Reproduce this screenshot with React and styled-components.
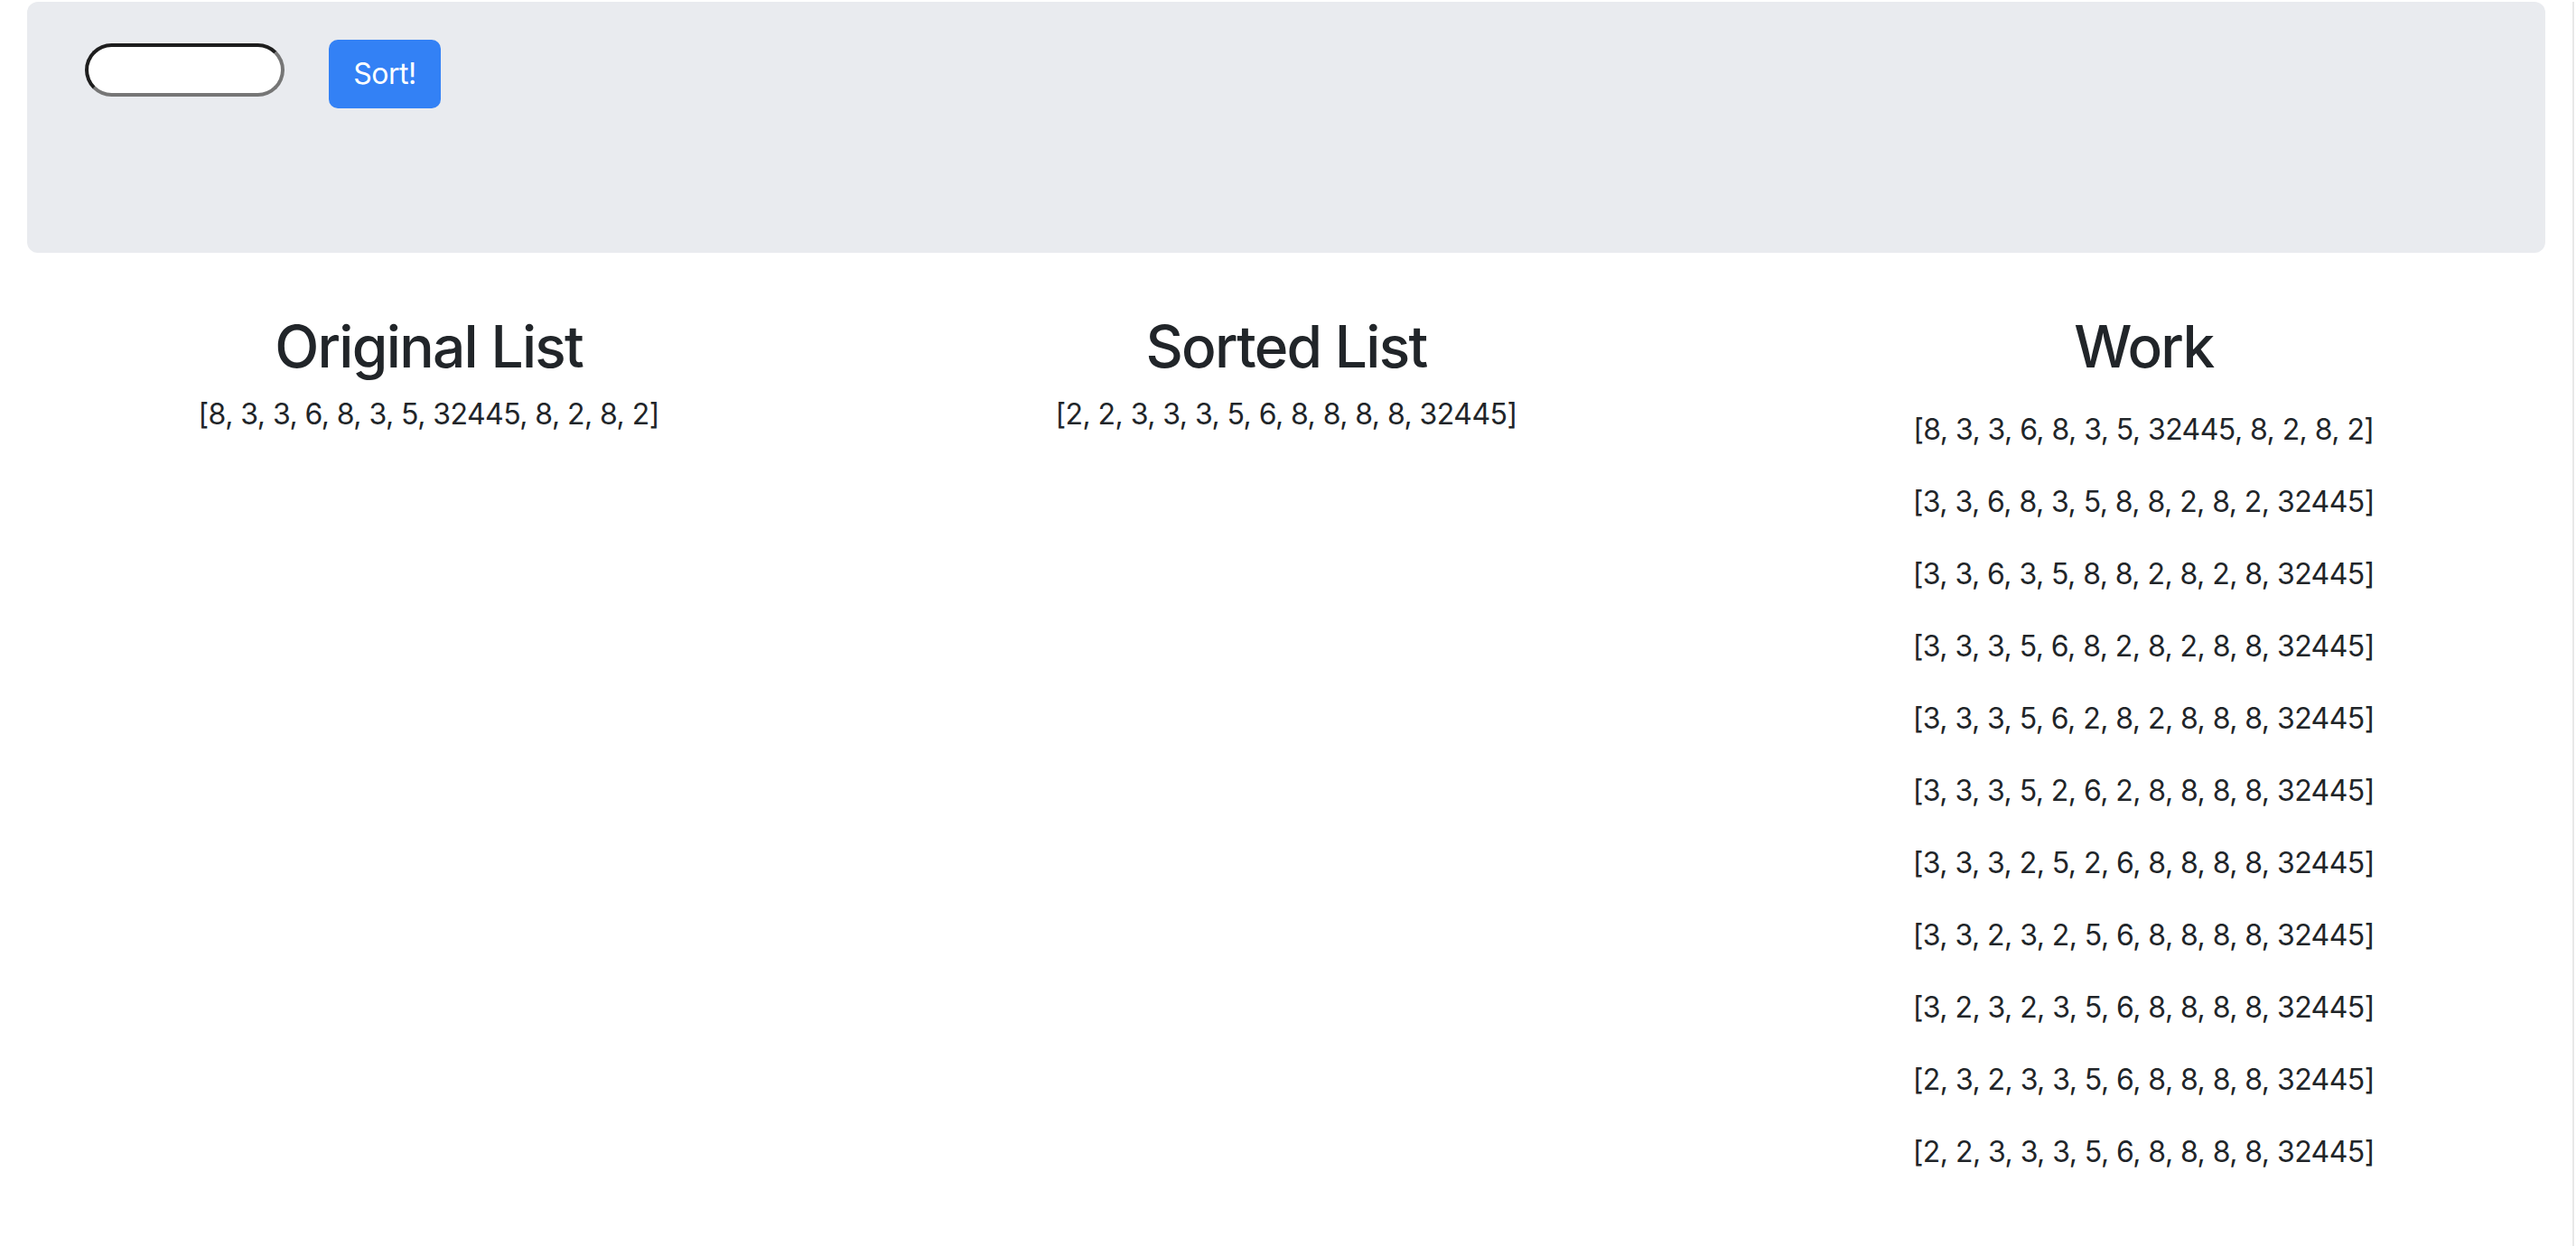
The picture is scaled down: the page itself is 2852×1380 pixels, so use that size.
import React from "react";
import styled, { createGlobalStyle } from "styled-components";

const GlobalStyle = createGlobalStyle`
    html, body {
        margin: 0;
        padding: 0;
        background: #fff;
    }
    body {
        font-family: Inter, "Noto Sans", "Liberation Sans", sans-serif;
        color: #212529;
    }
`

const Page = styled.div`
    width: 2850px;
    min-height: 1380px;
    box-sizing: border-box;
    border-right: 2px solid #e8e8e8;
`

const Jumbotron = styled.div`
    margin: 2px 30px 0 30px;
    height: 278px;
    box-sizing: border-box;
    padding: 42px 64px 0 64px;
    background-color: #e9ebef;
    border-radius: 12px;
    display: flex;
    align-items: flex-start;
    gap: 49px;
`

const NumberInput = styled.input`
    margin-top: 4px;
    width: 221px;
    height: 59px;
    box-sizing: border-box;
    border-style: solid;
    border-width: 4px;
    border-color: #1e1e1e #767676 #767676 #1e1e1e;
    border-radius: 30px;
    background: #fff;
    outline: none;
    padding: 0 20px;
    font-size: 28px;
`

const SortButton = styled.button`
    width: 124px;
    height: 76px;
    border: none;
    border-radius: 10px;
    background-color: #3381f5;
    color: #fff;
    font-family: Inter, "Noto Sans", sans-serif;
    font-size: 32px;
    letter-spacing: -0.5px;
    line-height: 48px;
    padding: 0;
    cursor: pointer;
`

const Columns = styled.div`
    display: grid;
    grid-template-columns: repeat(3, 1fr);
    padding-top: 66px;
`

const Column = styled.div`
    display: flex;
    flex-direction: column;
    align-items: center;
    text-align: center;
`

const Title = styled.h2`
    margin: 0;
    font-size: 64px;
    font-weight: 500;
    line-height: 1.2;
    letter-spacing: -1.7px;
`

const ListLine = styled.p`
    margin: ${props => props.first} 0 0 0;
    font-size: 32px;
    line-height: 48px;
    letter-spacing: -0.55px;
    & + & {
        margin-top: 32px;
    }
`

const original = [8, 3, 3, 6, 8, 3, 5, 32445, 8, 2, 8, 2];
const sorted = [...original].sort((a, b) => a - b);

const work = [
    [8, 3, 3, 6, 8, 3, 5, 32445, 8, 2, 8, 2],
    [3, 3, 6, 8, 3, 5, 8, 8, 2, 8, 2, 32445],
    [3, 3, 6, 3, 5, 8, 8, 2, 8, 2, 8, 32445],
    [3, 3, 3, 5, 6, 8, 2, 8, 2, 8, 8, 32445],
    [3, 3, 3, 5, 6, 2, 8, 2, 8, 8, 8, 32445],
    [3, 3, 3, 5, 2, 6, 2, 8, 8, 8, 8, 32445],
    [3, 3, 3, 2, 5, 2, 6, 8, 8, 8, 8, 32445],
    [3, 3, 2, 3, 2, 5, 6, 8, 8, 8, 8, 32445],
    [3, 2, 3, 2, 3, 5, 6, 8, 8, 8, 8, 32445],
    [2, 3, 2, 3, 3, 5, 6, 8, 8, 8, 8, 32445],
    [2, 2, 3, 3, 3, 5, 6, 8, 8, 8, 8, 32445],
];

const show = list => "[" + list.join(", ") + "]";

const App = () => {
    return (
        <Page>
            <GlobalStyle />
            <Jumbotron>
                <NumberInput type="text" />
                <SortButton>Sort!</SortButton>
            </Jumbotron>
            <Columns>
                <Column>
                    <Title>Original List</Title>
                    <ListLine first="12px">{show(original)}</ListLine>
                </Column>
                <Column>
                    <Title>Sorted List</Title>
                    <ListLine first="12px">{show(sorted)}</ListLine>
                </Column>
                <Column>
                    <Title>Work</Title>
                    {work.map((step, i) => (
                        <ListLine key={i} first="29px">{show(step)}</ListLine>
                    ))}
                </Column>
            </Columns>
        </Page>
    )
}

export default App;
